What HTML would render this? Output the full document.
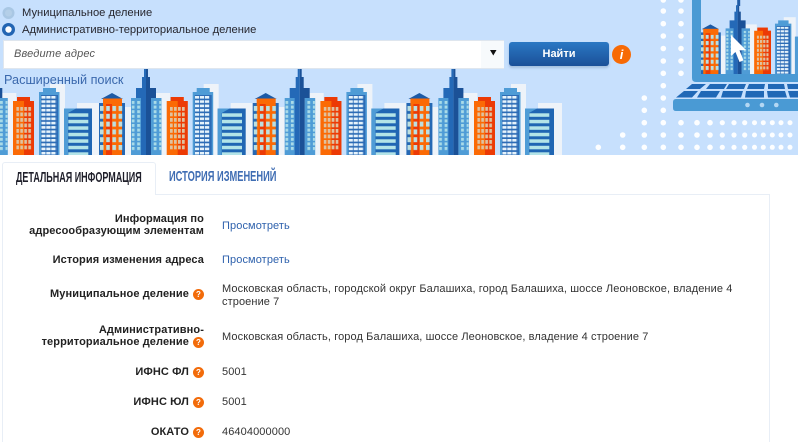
<!DOCTYPE html>
<html lang="ru"><head><meta charset="utf-8"><title>Адрес</title>
<style>
html,body{margin:0;padding:0;background:#fff;width:798px;height:442px;overflow:hidden}
#w{position:relative;width:798px;height:442px;overflow:hidden;font-family:"Liberation Sans",sans-serif;color:#222}
.a{position:absolute;white-space:nowrap}
svg.bg{position:absolute;left:0;top:0}
.l{position:absolute;left:4px;width:200px;text-align:right;font-weight:bold;font-size:11px;line-height:12px;letter-spacing:.1px;color:#222}
.v{position:absolute;left:222px;font-size:11px;line-height:13px;white-space:nowrap;color:#333;letter-spacing:.1px}
.v.k{color:#2f62ad}
.q{display:inline-block;width:11px;height:11px;border-radius:50%;background:#f26b0a;color:#fff;font-size:8px;line-height:11px;text-align:center;margin-left:4px;vertical-align:-2px;position:relative;top:-2px;font-weight:bold;letter-spacing:0}
.t{position:absolute;font-weight:bold;font-size:15px;line-height:16px;transform-origin:0 0;white-space:nowrap}
</style></head><body><div id="w">
<svg class="bg" width="798" height="155" viewBox="0 0 798 155" xmlns="http://www.w3.org/2000/svg">
<defs>
<pattern id="pA" patternUnits="userSpaceOnUse" x="16.300" y="107" width="4" height="5.500"><rect width="2.700" height="3.800" fill="#dfc2a0"/></pattern>
<pattern id="pB" patternUnits="userSpaceOnUse" x="41.300" y="96" width="5" height="4.300"><rect width="4.200" height="2.600" fill="#e6f3fb"/></pattern>
<pattern id="pC" patternUnits="userSpaceOnUse" x="68.300" y="113.300" width="20" height="6.500"><rect width="20" height="3.500" fill="#b3e4e8"/></pattern>
<pattern id="pD" patternUnits="userSpaceOnUse" x="100" y="106" width="6.200" height="7.800"><rect width="3.600" height="5" fill="#bcdfe0"/></pattern>
<pattern id="pE" patternUnits="userSpaceOnUse" x="131.700" y="101" width="5.500" height="4.600"><rect width="2.800" height="3" fill="#a9dbe8"/></pattern>
<g id="abc">
<rect x="50" y="84" width="15" height="71" fill="#eef3f9"/>
<rect x="77" y="103" width="24" height="52" fill="#eef3f9"/>
<path d="M13 101h4v-4h13v4h4v54H13z" fill="#fb6a05"/><path d="M17 97h13v4h4v54H24v-54h-7z" fill="#ec3a05"/>
<rect x="16.300" y="107" width="15" height="44" fill="url(#pA)"/>
<path d="M43 88h13v4h3.500v63H39V92h4z" fill="#4f9cd6"/>
<path d="M41 95h17v60H41z" fill="#2c6cb6"/>
<rect x="41.300" y="96" width="15" height="59" fill="url(#pB)"/>
<path d="M64 108.500h29v46.500H64z" fill="#2066b3"/><path d="M64 108.500h12l-8 4.500v42h-4z" fill="#4f9cd6"/>
<rect x="68.300" y="113" width="20" height="42" fill="url(#pC)"/>
</g>
<g id="de">
<rect x="155" y="93" width="15" height="62" fill="#eef3f9"/>
<rect x="125" y="107" width="6" height="48" fill="#eef3f9"/>
<rect x="92" y="107" width="8" height="48" fill="#eef3f9"/>
<path d="M101 99l11-6 11 6z" fill="#1c5aa6"/>
<rect x="99" y="103" width="26" height="52" fill="#2568b4"/>
<rect x="103" y="98.500" width="19" height="56.500" fill="#fb6a05"/>
<rect x="106" y="104" width="6" height="51" fill="#ec3a05"/>
<rect x="100" y="106" width="24" height="45" fill="url(#pD)"/>
<rect x="131" y="98" width="11" height="57" fill="#4f9cd6"/>
<rect x="151" y="98" width="10.500" height="57" fill="#4f9cd6"/>
<rect x="131.700" y="101" width="9" height="50" fill="url(#pE)"/>
<rect x="152.700" y="101" width="8.500" height="50" fill="url(#pE)"/>
<path d="M146 69h2v8h2v11h6v10h-5v57h-5z" fill="#1b5197"/>
<path d="M146 69h-2v8h-2v11h-6v10h5v57h5z" fill="#2469b7"/>
</g>
<clipPath id="scr"><rect x="701" y="0" width="97" height="74"/></clipPath>
</defs>
<rect width="798" height="155" fill="#c7e0fd"/>
<g><use href="#de" x="-153.700"/><use href="#abc"/><use href="#de"/><use href="#abc" x="153.700"/><use href="#de" x="153.700"/><use href="#abc" x="307.400"/><use href="#de" x="307.400"/><use href="#abc" x="461"/></g>
<g fill="#fdfeff">
<circle cx="663.300" cy="0" r="2.800"/><circle cx="663.300" cy="11" r="2.800"/><circle cx="663.300" cy="23.700" r="2.800"/><circle cx="663.300" cy="36" r="2.800"/><circle cx="663.300" cy="48.500" r="2.800"/><circle cx="663.300" cy="61" r="2.800"/><circle cx="663.300" cy="73.300" r="2.800"/><circle cx="663.300" cy="85.700" r="2.800"/><circle cx="663.300" cy="98" r="2.800"/><circle cx="663.300" cy="110.300" r="2.800"/>
<circle cx="681" cy="0" r="2.800"/><circle cx="681" cy="11" r="2.800"/><circle cx="681" cy="23.700" r="2.800"/><circle cx="681" cy="36" r="2.800"/><circle cx="681" cy="48.500" r="2.800"/><circle cx="681" cy="61" r="2.800"/><circle cx="681" cy="73.300" r="2.800"/>
<circle cx="644.300" cy="98" r="2.800"/><circle cx="644.300" cy="110.300" r="2.800"/>
<g id="r"><circle cx="644.300" cy="122.700" r="2.800"/><circle cx="663.300" cy="122.700" r="2.800"/><circle cx="681" cy="122.700" r="2.800"/><circle cx="697" cy="122.700" r="2.800"/><circle cx="710" cy="122.700" r="2.800"/><circle cx="722.300" cy="122.700" r="2.600"/><circle cx="734" cy="122.700" r="2.600"/><circle cx="744.700" cy="122.700" r="2.600"/><circle cx="754.500" cy="122.700" r="2.500"/><circle cx="763.300" cy="122.700" r="2.500"/><circle cx="772.300" cy="122.700" r="2.500"/><circle cx="781" cy="122.700" r="2.500"/><circle cx="790" cy="122.700" r="2.500"/></g>
<use href="#r" y="12.300"/><use href="#r" y="24.600"/>
<circle cx="622.700" cy="135" r="2.800"/><circle cx="622.700" cy="147.300" r="2.800"/><circle cx="598.300" cy="147.300" r="2.800"/>
</g>
<path d="M692 -1h106v83H696q-4 0-4-4z" fill="#4a9ad4"/>
<rect x="701" y="0" width="97" height="74" fill="#c7e0fd"/>
<g clip-path="url(#scr)"><g transform="translate(620.800 -50) scale(.8)"><use href="#de"/><use href="#abc" x="153.700"/></g>
<rect x="737.200" y="-1" width="3" height="7" fill="#1f5ba6"/></g>
<path d="M731 35l0 21 4.500-4 4 10 4-1.600-4-10 6.500-.4z" fill="#fff"/>
<g fill="#2068b6">
<path d="M692 84h14l-6 5h-14z"/><path d="M710 84h17l-3 5h-18z"/><path d="M729 84h17l-2 5h-18z"/><path d="M749 84h16l-1 5h-17z"/><path d="M768 84h16l1 5h-17z"/><path d="M787 84h11v5h-10z"/>
<path d="M684 91h14l-6 6.500h-16z"/><path d="M701 91h19l-4 6.500h-19z"/><path d="M723 91h20l-2 6.500h-20z"/><path d="M746 91h18v6.500h-19z"/><path d="M767 91h18l2 6.500h-19z"/><path d="M788 91h10v6.500h-8z"/>
</g>
<path d="M676 99h122v12H676q-3 0-3-3v-6q0-3 3-3z" fill="#4a9ad4"/>
<g fill="#b4d7f3"><circle cx="747.500" cy="105" r="2.300"/><circle cx="762" cy="105" r="2.300"/><circle cx="776.300" cy="105" r="2.300"/></g>
<circle cx="8.500" cy="13" r="6" fill="#a9c7e4"/><circle cx="8.500" cy="13" r="3.500" fill="#b4cfe8"/>
<circle cx="8.500" cy="29.500" r="6.500" fill="#2265b3"/><circle cx="8.500" cy="29.500" r="3.200" fill="#fff"/>
</svg>

<div class="a" style="left:22px;top:6px;font-size:11.200px;line-height:14px;color:#26262e">Муниципальное деление</div>
<div class="a" style="left:22px;top:23px;font-size:11.200px;line-height:14px;color:#26262e">Административно-территориальное деление</div>

<div class="a" style="left:4px;top:41px;width:499px;height:27px;background:#fff;box-shadow:0 0 0 1px #dfe6ee;"></div>
<div class="a" style="left:481px;top:41px;width:23px;height:27px;background:#f7fafc"></div>
<div class="a" style="left:14px;top:47px;font-size:11px;line-height:14px;font-style:italic;color:#555;letter-spacing:.15px">Введите адрес</div>
<svg class="a" style="left:490px;top:50px" width="7" height="6"><path d="M0 0h6.500L3.300 5.500z" fill="#111"/></svg>
<div class="a" style="left:509px;top:42px;width:100px;height:24px;border-radius:3px;background:linear-gradient(#2a78c4,#1b5098);box-shadow:0 2px 2px rgba(60,90,130,.25);color:#fff;font-weight:bold;font-size:11px;line-height:24px;text-align:center">Найти</div>
<div class="a" style="left:612px;top:45px;width:19px;height:19px;border-radius:50%;background:#f76a05;color:#fff;font:italic bold 13px/19px 'Liberation Sans',sans-serif;text-align:center">i</div>
<div class="a" style="left:4px;top:72px;font-size:12.700px;line-height:16px;color:#3a68ad">Расширенный поиск</div>

<div class="a" style="left:2px;top:194px;width:768px;height:260px;border:1px solid #e8eef6;box-sizing:border-box"></div>
<div class="a" style="left:2px;top:162px;width:154px;height:33px;background:#fff;border:1px solid #e8eef6;border-bottom:0;border-radius:3px 3px 0 0;box-sizing:border-box"></div>
<div class="t" style="left:16px;top:170px;color:#1f1f2a;transform:scaleX(.6)">ДЕТАЛЬНАЯ ИНФОРМАЦИЯ</div>
<div class="t" style="left:169px;top:169px;color:#3f6db3;transform:scaleX(.62)">ИСТОРИЯ ИЗМЕНЕНИЙ</div>

<div class="l" style="top:213px">Информация по<br>адресообразующим элементам</div>
<div class="v k" style="top:220px">Просмотреть</div>
<div class="l" style="top:254px">История изменения адреса</div>
<div class="v k" style="top:254px">Просмотреть</div>
<div class="l" style="top:288px">Муниципальное деление<span class="q">?</span></div>
<div class="v" style="top:283px">Московская область, городской округ Балашиха, город Балашиха, шоссе Леоновское, владение 4<br>строение 7</div>
<div class="l" style="top:324px">Административно-<br>территориальное деление<span class="q">?</span></div>
<div class="v" style="top:331px">Московская область, город Балашиха, шоссе Леоновское, владение 4 строение 7</div>
<div class="l" style="top:366px">ИФНС ФЛ<span class="q">?</span></div>
<div class="v" style="top:366px">5001</div>
<div class="l" style="top:396px">ИФНС ЮЛ<span class="q">?</span></div>
<div class="v" style="top:396px">5001</div>
<div class="l" style="top:426px">ОКАТО<span class="q">?</span></div>
<div class="v" style="top:426px">46404000000</div>
</div></body></html>
